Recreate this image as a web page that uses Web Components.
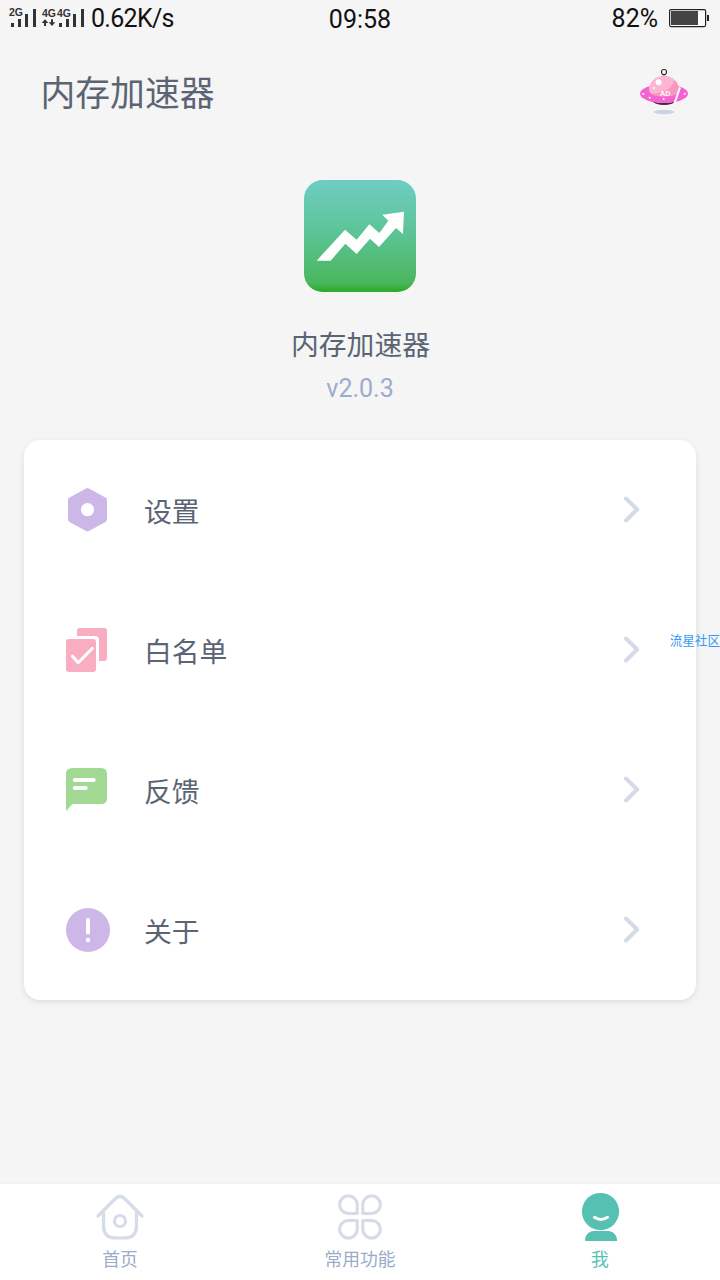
<!DOCTYPE html>
<html lang="zh-CN">
<head>
<meta charset="utf-8">
<title>内存加速器</title>
<style>
html,body{margin:0;height:100%;overflow:hidden}
body{background:#f5f5f5;font-family:Roboto,"Noto Sans CJK SC",sans-serif;font-weight:400;color:#5a6473}
</style>
</head>
<body>
<app-screen></app-screen>

<template id="t-screen">
<style>
:host{display:flex;flex-direction:column;width:720px;height:1280px;position:relative;overflow:hidden;background:#f5f5f5}
menu-card{margin:0 24px}
tab-bar{margin-top:auto}
.mark{position:absolute;right:0;top:631px;font:12.600px/18px "Noto Sans CJK SC",sans-serif;color:#3498f5;white-space:nowrap}
</style>
<status-bar></status-bar>
<app-header>内存加速器</app-header>
<app-brand><span>内存加速器</span><span slot="version">v2.0.3</span></app-brand>
<menu-card>
<menu-row icon="settings">设置</menu-row>
<menu-row icon="list">白名单</menu-row>
<menu-row icon="feedback">反馈</menu-row>
<menu-row icon="about">关于</menu-row>
</menu-card>
<tab-bar>
<tab-item icon="home">首页</tab-item>
<tab-item icon="apps">常用功能</tab-item>
<tab-item icon="me" active>我</tab-item>
</tab-bar>
<div class="mark">流星社区</div>
</template>

<template id="t-status">
<style>
:host{display:grid;grid-template-columns:1fr auto 1fr;align-items:start;height:38px;color:#111;font-size:25px;line-height:38px;white-space:nowrap}
.l,.r{display:flex;align-items:flex-start}
.r{justify-content:flex-end;padding-right:10px;gap:11px}
.speed{font-size:25px;letter-spacing:-.7px;margin-left:1px}
.time{line-height:40px}
svg{display:block;flex:none}
.bat{margin-top:8px}
</style>
<div class="l">
<svg width="90" height="38" viewBox="0 0 90 38" fill="#333" font-family="Liberation Sans,sans-serif" font-weight="700" font-size="10.500">
<text x="9" y="16" textLength="14" lengthAdjust="spacingAndGlyphs">2G</text>
<text x="42" y="16.500" textLength="14" lengthAdjust="spacingAndGlyphs">4G</text>
<text x="57" y="16.500" textLength="14" lengthAdjust="spacingAndGlyphs">4G</text>
<path d="M11 23h3v4h-3zM18 19h3v8h-3zM25 14h3v13h-3zM33 9h3v18h-3zM59 23h3v4h-3zM66 19h3v8h-3zM73 14h3v13h-3zM81 9h3v18h-3z"/>
<path d="M45 19.300l3.300 3.700h-2.300v3h-2v-3h-2.300zM52 26l3.300-3.700h-2.300v-3h-2v3h-2.300z"/>
</svg>
<span class="speed">0.62K/s</span></div>
<span class="time">09:58</span>
<div class="r"><span>82%</span>
<svg class="bat" width="41" height="20" viewBox="0 0 41 20"><rect x=".6" y="1.600" width="36" height="17" rx="1.500" fill="#fafafa" stroke="#222" stroke-width="1.200"/><path d="M2 3h27v14H2z" fill="#444"/><path d="M38 7h2v6h-2z" fill="#222"/></svg></div>
</template>

<template id="t-header">
<style>
:host{display:flex;justify-content:space-between;align-items:center;height:106px;padding:0 26px 0 40.500px;font-size:34.800px}
svg{display:block}
</style>
<slot></slot>
<svg width="60" height="50" viewBox="162 198 180 150">
<ellipse cx="252" cy="336" rx="31" ry="6.500" fill="#cad3e2"/>
<path d="M212 302q37 14 80 0l-16 9q-24 8-48 0z" fill="#4c2440"/>
<ellipse cx="252" cy="281" rx="72" ry="28" fill="#f562d2"/>
<path d="M207 270a45 43 0 0 1 90 0q-2 19-45 19t-45-19z" fill="#ffb4d3"/>
<path d="M283 240q14 13 14 30-3 18-43 19-30 0-40-8 62-4 69-41z" fill="#f996c2"/>
<path d="M300 262l-16 47" stroke="#fff" stroke-width="6"/>
<circle cx="236" cy="247" r="9" fill="#fff"/><g fill="#fff"><circle cx="222" cy="264" r="3"/><circle cx="190" cy="282" r="3"/><circle cx="209" cy="293" r="3"/><circle cx="251" cy="297" r="3"/><circle cx="314" cy="281" r="3"/></g>
<circle cx="252" cy="216" r="7.500" fill="#fff" stroke="#333" stroke-width="3.500"/><path d="M252 223v4" stroke="#333" stroke-width="4"/>
<text x="240" y="287" font-family="Roboto,sans-serif" font-size="23" font-weight="500" fill="#fff" textLength="31" lengthAdjust="spacingAndGlyphs">AD</text>
</svg>
</template>

<template id="t-brand">
<style>
:host{display:flex;flex-direction:column;align-items:center;padding-top:36px;height:260px;font-size:27.800px}
svg{display:block;margin-bottom:34px}
.n{line-height:40px;padding-left:1px}
.v{font-size:25px;line-height:40px;color:#9bacce;margin-top:3px}
</style>
<svg width="112" height="112" viewBox="42 30 336 336">
<defs><linearGradient id="g" x1="0" y1="0" x2="0" y2="1"><stop offset="0" stop-color="#6ecdc3"/><stop offset=".5" stop-color="#5bc394"/><stop offset=".92" stop-color="#4ab65c"/><stop offset=".98" stop-color="#31ab31"/></linearGradient></defs>
<rect x="42" y="30" width="336" height="336" rx="56" fill="url(#g)"/>
<path fill="#fff" d="M80 272L165 179 200 209 238 163 268 189 295 152 277 134 342 125 339 192 318 174 267 231 240 206 200 252 166 221 122 272z"/>
</svg>
<div class="n"><slot></slot></div><div class="v"><slot name="version"></slot></div>
</template>

<template id="t-card">
<style>:host{display:flex;flex-direction:column;background:#fff;border-radius:16px;box-shadow:0 2px 6px rgba(0,0,0,.1)}</style>
<slot></slot>
</template>

<template id="t-row">
<style>
:host{display:flex;align-items:center;height:140px;padding:0 54px 0 40px;font-size:27.800px}
.i{width:48px;height:48px;margin-right:32px}
svg{display:block}
.c{margin-left:auto}
</style>
<div class="i"></div><slot></slot>
<svg class="c" width="20" height="30" viewBox="0 0 20 30" fill="none" stroke="#d3dbe7" stroke-width="4" stroke-linecap="round" stroke-linejoin="round"><path d="M4 3.500L15.200 14.500 4 25.500"/></svg>
</template>

<template id="t-tabs">
<style>:host{display:grid;grid-template-columns:repeat(3,1fr);height:96px;background:#fff;box-shadow:0 -1px 2px rgba(0,0,0,.025)}</style>
<slot></slot>
</template>

<template id="t-tab">
<style>
:host{display:flex;flex-direction:column;align-items:center;padding-top:6px;font-size:17.800px;line-height:26px;color:#9bacc9}
:host([active]){color:#56c1b3}
svg{display:block}
.i{width:54px;height:54px;margin-bottom:2.500px}
</style>
<div class="i"></div><slot></slot>
</template>

<script>
const rowIcons={
settings:'<svg width="48" height="48" viewBox="0 0 48 48"><path d="M23.500 5L40 14.200V33.300L23.500 42.500 7 33.300V14.200z" fill="#ccb7e8" stroke="#ccb7e8" stroke-width="6" stroke-linejoin="round"/><circle cx="23.500" cy="23.700" r="6.600" fill="#fff"/></svg>',
list:'<svg width="48" height="48" viewBox="0 0 48 48"><rect x="13" y="2" width="30" height="33" rx="3" fill="#f8adc1"/><path d="M2 10h29q4 0 4 4v23H2z" fill="#fff"/><rect x="2" y="13" width="30" height="33" rx="3" fill="#f8adc1"/><path d="M8.500 30.200l5.700 6.500L28.300 22.400" fill="none" stroke="#fff" stroke-width="3" stroke-linecap="round" stroke-linejoin="round"/></svg>',
feedback:'<svg width="48" height="48" viewBox="0 0 48 48"><path d="M8 2h29q6 0 6 6v24q0 6-6 6H8.500L2 45V8q0-6 6-6z" fill="#a1d993"/><path d="M10.700 14h19M10.700 22h11" stroke="#fff" stroke-width="4" stroke-linecap="round"/></svg>',
about:'<svg width="48" height="48" viewBox="0 0 48 48"><circle cx="24" cy="24" r="22" fill="#ccb7e8"/><path d="M24 14v12.500" stroke="#fff" stroke-width="4" stroke-linecap="round"/><circle cx="24" cy="34" r="2.200" fill="#fff"/></svg>'};
const s='<svg width="54" height="54" viewBox="0 0 54 54" fill="none" stroke="#d5dce8" stroke-width="3.200" stroke-linecap="round" stroke-linejoin="round">';
const petal=t=>'<path d="M25 23.500v-9a8.800 8.800 0 1 0-8.800 9z" transform="'+t+'"/>';
const tabIcons={
home:s+'<path d="M5 26L22.500 8.500Q27 4 31.500 8.500L49 26M10.500 23v13q0 12 12 12h9q12 0 12-12V23"/><circle cx="27" cy="31" r="5.500"/></svg>',
apps:s+petal('translate(-.8 0)')+petal('translate(54.800 0) scale(-1 1)')+petal('translate(-.8 54) scale(1 -1)')+petal('translate(54.800 54) scale(-1 -1)')+'</svg>',
me:'<svg width="54" height="54" viewBox="0 0 54 54"><circle cx="27.500" cy="21.500" r="18.600" fill="#56c1b3"/><path d="M12 51v-2q2-8 9-8h14q7 0 9 8v2H13q-1 0-1-1z" fill="#56c1b3"/><path d="M21.500 27.300q6.500 4.200 13 0" fill="none" stroke="#fff" stroke-width="3" stroke-linecap="round"/></svg>'};
class Base extends HTMLElement{
  constructor(){super();this.attachShadow({mode:'open'}).append(document.getElementById(this.constructor.tpl).content.cloneNode(true))}
}
class StatusBar extends Base{static tpl='t-status'}
class AppHeader extends Base{static tpl='t-header'}
class AppBrand extends Base{static tpl='t-brand'}
class MenuCard extends Base{static tpl='t-card'}
class MenuRow extends Base{static tpl='t-row';connectedCallback(){this.shadowRoot.querySelector('.i').innerHTML=rowIcons[this.getAttribute('icon')]}}
class TabBar extends Base{static tpl='t-tabs'}
class TabItem extends Base{static tpl='t-tab';connectedCallback(){this.shadowRoot.querySelector('.i').innerHTML=tabIcons[this.getAttribute('icon')]}}
class AppScreen extends Base{static tpl='t-screen'}
customElements.define('status-bar',StatusBar);
customElements.define('app-header',AppHeader);
customElements.define('app-brand',AppBrand);
customElements.define('menu-card',MenuCard);
customElements.define('menu-row',MenuRow);
customElements.define('tab-bar',TabBar);
customElements.define('tab-item',TabItem);
customElements.define('app-screen',AppScreen);
</script>
</body>
</html>
